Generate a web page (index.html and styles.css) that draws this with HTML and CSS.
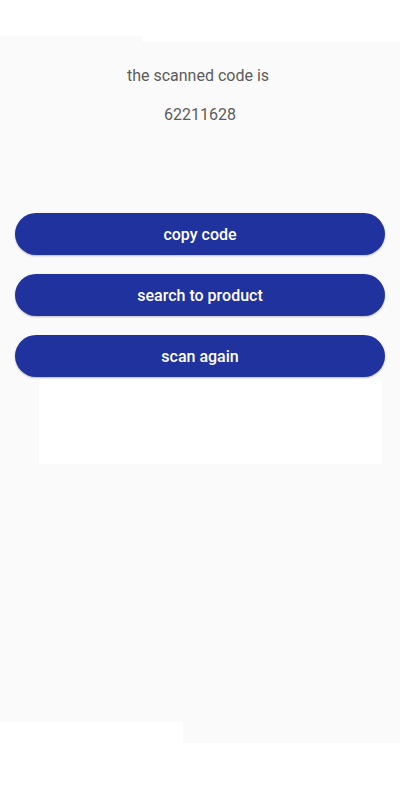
FILE: index.html
```html
<!DOCTYPE html>
<html>
<head>
<meta charset="utf-8">
<link rel="stylesheet" href="styles.css">
</head>
<body>
<div class="top-gap"></div>
<div class="tab-top"></div>
<main class="screen">
  <p class="label">the scanned code is</p>
  <p class="code">62211628</p>
  <div class="actions">
    <button class="btn">copy code</button>
    <button class="btn">search to product</button>
    <button class="btn">scan again</button>
  </div>
  <div class="panel"></div>
</main>
<div class="tab-bottom"></div>
</body>
</html>
```
FILE: styles.css
```css
html, body {
  margin: 0;
  padding: 0;
  background: #ffffff;
  font-family: Roboto, "Liberation Sans", sans-serif;
}
.top-gap {
  height: 36px;
}
.tab-top {
  width: 142px;
  height: 6px;
  background: #fafafa;
}
.screen {
  height: 680px;
  background: #fafafa;
  display: flex;
  flex-direction: column;
  align-items: center;
}
.label {
  margin: 24px 0 0;
  padding-right: 4px;
  font-size: 16px;
  line-height: 19px;
  color: #5c5c5c;
  letter-spacing: 0;
}
.code {
  margin: 20px 0 0;
  font-size: 16px;
  line-height: 19px;
  color: #5c5c5c;
  letter-spacing: 0;
}
.actions {
  margin-top: 89px;
  align-self: stretch;
  padding: 0 15px 0 15px;
  display: flex;
  flex-direction: column;
  gap: 19px;
}
.btn {
  height: 42px;
  border: none;
  border-radius: 21px;
  background: #20329e;
  color: #ffffff;
  font-family: Roboto, "Liberation Sans", sans-serif;
  font-weight: 500;
  font-size: 16px;
  box-shadow: 0 1px 2px rgba(0,0,0,0.25);
  padding: 0;
}
.panel {
  align-self: flex-start;
  margin: 2px 0 0 39px;
  width: 343px;
  height: 85px;
  background: #ffffff;
}
.tab-bottom {
  margin-left: 183px;
  height: 21px;
  background: #fafafa;
}
```
